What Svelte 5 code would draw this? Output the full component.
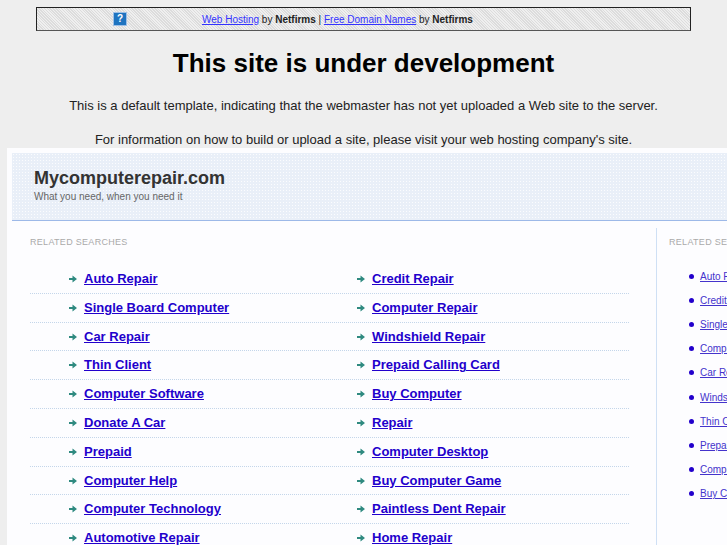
<script lang="ts">
	const rows = [
		['Auto Repair', 'Credit Repair'],
		['Single Board Computer', 'Computer Repair'],
		['Car Repair', 'Windshield Repair'],
		['Thin Client', 'Prepaid Calling Card'],
		['Computer Software', 'Buy Computer'],
		['Donate A Car', 'Repair'],
		['Prepaid', 'Computer Desktop'],
		['Computer Help', 'Buy Computer Game'],
		['Computer Technology', 'Paintless Dent Repair'],
		['Automotive Repair', 'Home Repair']
	];
	const side = [
		'Auto Repair',
		'Credit Repair',
		'Single Board Computer',
		'Computer Repair',
		'Car Repair',
		'Windshield Repair',
		'Thin Client',
		'Prepaid Calling Card',
		'Computer Software',
		'Buy Computer'
	];
</script>

<div class="page">
	<section class="notice">
		<div class="bar">
			<span class="help">?</span>
			<p class="credits">
				<a href="#top">Web Hosting</a> by <b>Netfirms</b> | <a href="#top">Free Domain Names</a> by <b>Netfirms</b>
			</p>
		</div>
		<h1>This site is under development</h1>
		<p class="msg">This is a default template, indicating that the webmaster has not yet uploaded a Web site to the server.</p>
		<p class="msg second">For information on how to build or upload a site, please visit your web hosting company's site.</p>
	</section>

	<section class="frame">
		<header class="head">
			<div>
				<div class="domain">Mycomputerepair.com</div>
				<div class="tagline">What you need, when you need it</div>
			</div>
			<div class="date">Ju</div>
		</header>
		<div class="body">
			<div class="main">
				<h2>RELATED SEARCHES</h2>
				<ul class="grid">
					{#each rows as row}
						<li class="row">
							{#each row as label}
								<a class="big" href="#top">
									<svg width="8" height="8" viewBox="0 0 8 8"><path d="M0 3h3.5V0.5L8 4 3.5 7.5V5H0z" fill="#2f8a80" /></svg>
									<span>{label}</span>
								</a>
							{/each}
						</li>
					{/each}
				</ul>
			</div>
			<aside class="side">
				<h2>RELATED SEARCHES</h2>
				<ul class="list">
					{#each side as label}
						<li><i></i><a href="#top">{label}</a></li>
					{/each}
				</ul>
			</aside>
		</div>
	</section>
</div>

<style>
	:global(body) {
		margin: 0;
		overflow: hidden;
	}

	.page {
		width: 727px;
		height: 545px;
		overflow: hidden;
		background: #eeeeee;
		font-family: "Liberation Sans", Arial, sans-serif;
	}

	.notice {
		height: 148px;
		overflow: hidden;
		text-align: center;
	}

	.bar {
		display: flex;
		align-items: center;
		box-sizing: border-box;
		width: 655px;
		height: 24px;
		margin: 7px 0 0 36px;
		border: 1px solid #222;
		border-bottom-color: #555;
		background-color: #e6e6e6;
		background-image: repeating-linear-gradient(45deg, #dcdcdc 0 1px, #efefef 1px 2px);
	}

	.help {
		box-sizing: border-box;
		width: 14px;
		height: 14px;
		margin-left: 76px;
		border: 1px solid #9fc0e6;
		background: #1f74c0;
		color: #fff;
		font-size: 10px;
		font-weight: bold;
		line-height: 12px;
	}

	.credits {
		margin: 0 0 0 75px;
		font-size: 10px;
		color: #222;
		white-space: nowrap;
	}

	.credits a {
		color: #3333ff;
	}

	h1 {
		margin: 16px 0 0;
		font-size: 26px;
		line-height: 32px;
		color: #000;
	}

	.msg {
		margin: 19px 0 0;
		font-size: 13px;
		line-height: 16px;
		color: #222;
		white-space: nowrap;
	}

	.msg.second {
		margin-top: 18px;
	}

	.frame {
		box-sizing: border-box;
		width: 740px;
		height: 420px;
		margin-left: 7px;
		padding: 5px;
		background: #fdfdff;
	}

	.head {
		display: flex;
		justify-content: space-between;
		box-sizing: border-box;
		height: 68px;
		padding: 14px 0 0 22px;
		border-bottom: 1px solid #9db9e8;
		background-color: #e9eff8;
		background-image: radial-gradient(#fbfcfe 0.6px, transparent 0.7px);
		background-size: 3px 3px;
	}

	.domain {
		font-size: 18px;
		line-height: 22px;
		font-weight: bold;
		color: #333;
	}

	.tagline {
		margin-top: 2px;
		font-size: 10px;
		line-height: 12px;
		color: #666;
	}

	.date {
		width: 15px;
		margin-top: 12px;
		font-size: 9px;
		line-height: 12px;
		color: #333;
	}

	.body {
		display: flex;
		padding-top: 7px;
	}

	.main {
		box-sizing: border-box;
		flex: none;
		width: 645px;
		padding: 8px 27px 0 18px;
		border-right: 1px solid #cfe0f5;
	}

	h2 {
		margin: 0;
		font-size: 9px;
		font-weight: normal;
		line-height: 12px;
		letter-spacing: 0.3px;
		color: #aaa;
	}

	.grid,
	.list {
		margin: 0;
		padding: 0;
		list-style: none;
	}

	.grid {
		margin-top: 17px;
	}

	.row {
		display: grid;
		grid-template-columns: 288px 1fr;
		box-sizing: border-box;
		height: 28.8px;
		padding: 6px 0 0 39px;
		border-bottom: 1px dotted #c4d6ea;
	}

	.big {
		display: flex;
		align-items: center;
		align-self: start;
		gap: 7px;
		font-size: 13px;
		line-height: 16px;
		font-weight: bold;
		color: #2200cc;
		white-space: nowrap;
	}

	.side {
		flex: none;
		padding: 8px 0 0 12px;
		white-space: nowrap;
	}

	.list {
		margin-top: 16px;
		padding-left: 20px;
	}

	.list li {
		display: flex;
		align-items: center;
		gap: 6px;
		height: 24.2px;
	}

	.list i {
		width: 5px;
		height: 5px;
		border-radius: 50%;
		background: #2200cc;
	}

	.list a {
		font-size: 10px;
		color: #4433cc;
	}
</style>
